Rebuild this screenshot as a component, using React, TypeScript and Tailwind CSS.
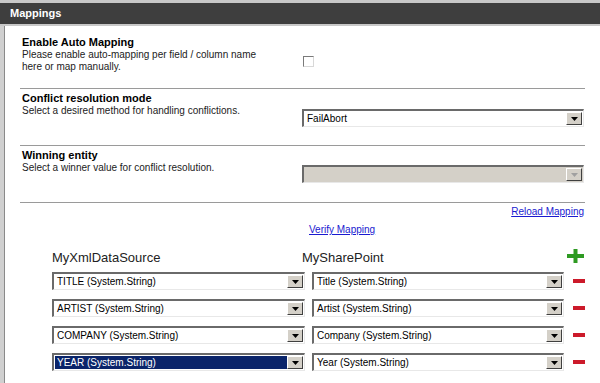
import React from "react";

const FONT = { fontFamily: '"Liberation Sans", Arial, sans-serif' };

function Arrow({ disabled }: { disabled?: boolean }) {
  return (
    <div className="flex h-full w-[16px] shrink-0 items-center justify-center border-t border-l border-t-white border-l-white border-b border-r border-b-[#404040] border-r-[#404040] bg-[#d4d0c8]">
      <svg width="7" height="4" viewBox="0 0 7 4">
        <path d="M0 0h7L3.5 4z" fill={disabled ? "#a0a0a0" : "#000"} />
      </svg>
    </div>
  );
}

function Select({
  value,
  width,
  selected,
  disabled,
}: {
  value?: string;
  width: string;
  selected?: boolean;
  disabled?: boolean;
}) {
  return (
    <div
      className={`${width} h-[18px] border-t-2 border-l-2 border-t-[#6a6a6a] border-l-[#6a6a6a] border-b border-r border-b-[#e8e8e8] border-r-[#e8e8e8] ${
        disabled ? "bg-[#d4d0c8]" : "bg-white"
      }`}
    >
      <div className="flex h-full items-stretch p-px">
        <div
          className={`flex flex-1 items-center overflow-hidden whitespace-nowrap pl-[2px] text-[10px] ${
            selected ? "bg-[#0a246a] text-white" : "text-black"
          }`}
        >
          {value}
        </div>
        <Arrow disabled={disabled} />
      </div>
    </div>
  );
}

function Section({
  title,
  desc,
  height,
  pt,
  children,
}: {
  title: string;
  desc: React.ReactNode;
  height: string;
  pt: string;
  children: React.ReactNode;
}) {
  return (
    <div className={`${height} ${pt} flex border-b border-[#9a9a9a]`}>
      <div className="w-[282px] pl-[2px]">
        <div className="text-[11px] font-bold leading-[13px] text-black">{title}</div>
        <div className="text-[10px] leading-[12px] text-[#222]">{desc}</div>
      </div>
      <div className="flex-1">{children}</div>
    </div>
  );
}

const rows = [
  ["TITLE (System.String)", "Title (System.String)"],
  ["ARTIST (System.String)", "Artist (System.String)"],
  ["COMPANY (System.String)", "Company (System.String)"],
  ["YEAR (System.String)", "Year (System.String)"],
];

export default function App() {
  return (
    <div className="flex h-[383px] w-[600px] flex-col overflow-hidden bg-white" style={FONT}>
      {/* title bar */}
      <div className="border-t-[3px] border-b-2 border-t-[#c8c8c8] border-b-[#c8c8c8] bg-[#3e3e3e]">
        <div className="flex h-[21px] items-center pl-[10px] text-[11px] font-bold text-white">
          Mappings
        </div>
      </div>

      <div className="flex flex-1">
        <div className="w-[4px] bg-[#d0d0d0]" />
        <div className="w-px bg-[#8a8a8a]" />
        <div className="flex-1 pl-[15px] pr-[15px]">
          <Section
            title="Enable Auto Mapping"
            desc={
              <>
                Please enable auto-mapping per field / column name
                <br />
                here or map manually.
              </>
            }
            height="h-[63px]"
            pt="pt-[10px]"
          >
            <div className="mt-[20px] ml-[1px] h-[11px] w-[11px] border border-[#7a7a7a] border-b-[#d8d8d8] border-r-[#d8d8d8] bg-white" />
          </Section>

          <Section
            title="Conflict resolution mode"
            desc="Select a desired method for handling conflictions."
            height="h-[57px]"
            pt="pt-[3px]"
          >
            <div className="mt-[17px]">
              <Select value="FailAbort" width="w-[282px]" />
            </div>
          </Section>

          <Section
            title="Winning entity"
            desc="Select a winner value for conflict resolution."
            height="h-[57px]"
            pt="pt-[3px]"
          >
            <div className="mt-[16px]">
              <Select width="w-[282px]" disabled />
            </div>
          </Section>

          <div className="flex justify-end pt-[2px] pr-[1px] text-[10px] leading-[13px]">
            <a className="text-[#1a1ad0] underline">Reload Mapping</a>
          </div>
          <div className="pl-[289px] pt-[5px] text-[10px] leading-[13px]">
            <a className="text-[#1a1ad0] underline">Verify Mapping</a>
          </div>

          {/* mapping grid */}
          <div className="pl-[32px] pt-[13px]">
            <div className="flex h-[18px] items-center text-[13px] text-[#222]">
              <div className="w-[250px]">MyXmlDataSource</div>
              <div className="w-[265px]">MySharePoint</div>
              <svg width="17" height="14" viewBox="0 0 17 14" className="mt-[-4px]">
                <rect x="0" y="5" width="17" height="4" fill="#2e9a22" />
                <rect x="6.5" y="0" width="4" height="14" fill="#2e9a22" />
              </svg>
            </div>
            <div className="flex flex-col gap-[9px] pt-[5px]">
              {rows.map(([l, r], i) => (
                <div key={l} className="flex items-center">
                  <Select value={l} width="w-[253px]" selected={i === 3} />
                  <div className="w-[7px]" />
                  <Select value={r} width="w-[252px]" />
                  <div className="ml-[9px] h-[4px] w-[12px] bg-[#cc1a2a]" />
                </div>
              ))}
            </div>
          </div>
        </div>
      </div>
    </div>
  );
}
